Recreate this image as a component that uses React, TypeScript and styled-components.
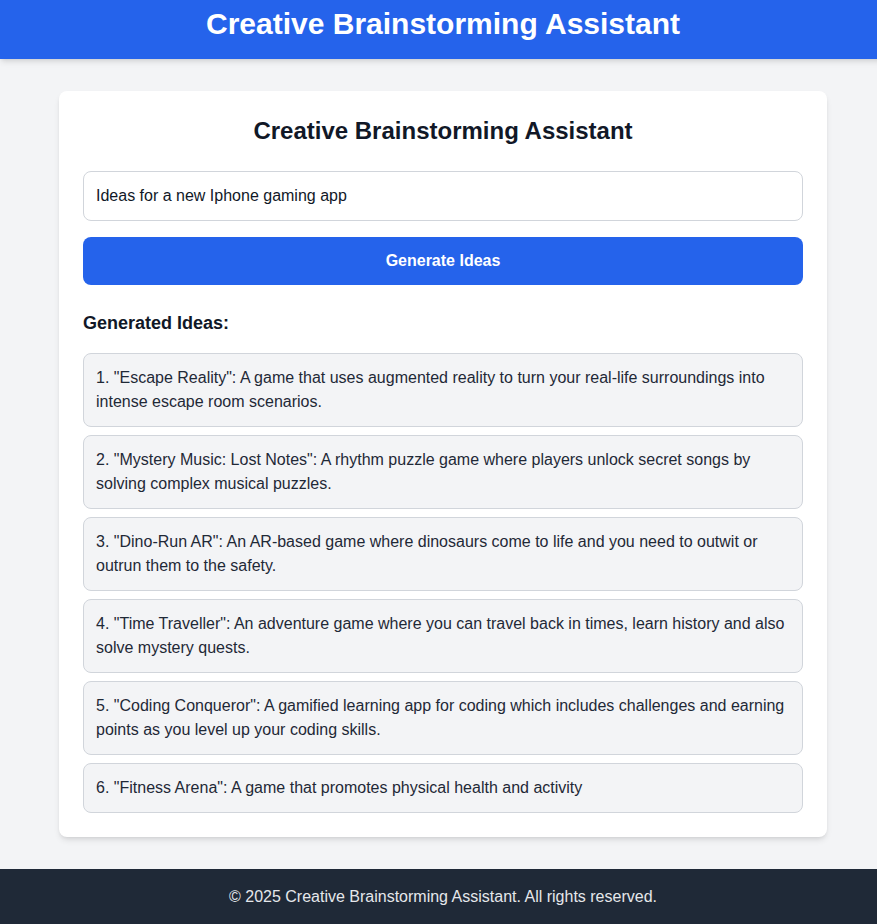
import React, { useState } from "react";
import styled, { createGlobalStyle } from "styled-components";

const GlobalStyle = createGlobalStyle`
  * { box-sizing: border-box; }
  html, body { margin: 0; padding: 0; overflow-x: hidden; }
  body {
    font-family: "Liberation Sans", Arial, sans-serif;
    background: #f3f4f6;
    color: #1f2937;
  }
`;

const Page = styled.div`
  width: 886px;
  min-height: 924px;
  display: flex;
  flex-direction: column;
  background: #f3f4f6;
`;

const Header = styled.header`
  height: 59px;
  background: #2563eb;
  box-shadow: 0 4px 6px -1px rgba(0, 0, 0, 0.1), 0 2px 4px -2px rgba(0, 0, 0, 0.1);
  display: flex;
  justify-content: center;
  align-items: flex-start;
  padding-top: 6px;
  position: relative;
  z-index: 1;
`;

const HeaderTitle = styled.h1`
  margin: 0;
  font-size: 30px;
  line-height: 36px;
  font-weight: 700;
  color: #ffffff;
`;

const Main = styled.main`
  flex: 1;
  padding: 32px 0;
  display: flex;
  justify-content: center;
`;

const Card = styled.section`
  width: 768px;
  background: #ffffff;
  border-radius: 8px;
  box-shadow: 0 4px 6px -1px rgba(0, 0, 0, 0.1), 0 2px 4px -2px rgba(0, 0, 0, 0.1);
  padding: 24px;
`;

const CardTitle = styled.h2`
  margin: 0 0 24px;
  font-size: 24px;
  line-height: 32px;
  font-weight: 700;
  text-align: center;
  color: #111827;
`;

const Input = styled.input`
  display: block;
  width: 100%;
  height: 50px;
  padding: 12px;
  border: 1px solid #d1d5db;
  border-radius: 8px;
  font-family: inherit;
  font-size: 16px;
  line-height: 24px;
  color: #111827;
  background: #ffffff;
  outline: none;
  margin-bottom: 16px;
`;

const Button = styled.button`
  display: block;
  width: 100%;
  height: 48px;
  padding: 12px;
  border: none;
  border-radius: 8px;
  background: #2563eb;
  color: #ffffff;
  font-family: inherit;
  font-size: 16px;
  line-height: 24px;
  font-weight: 700;
  cursor: pointer;
`;

const Results = styled.div`
  margin-top: 24px;
`;

const ResultsTitle = styled.h3`
  margin: 0 0 16px;
  font-size: 18px;
  line-height: 28px;
  font-weight: 700;
  color: #111827;
`;

const IdeaList = styled.ul`
  list-style: none;
  margin: 0;
  padding: 0;
  display: flex;
  flex-direction: column;
  gap: 8px;
`;

const Idea = styled.li`
  background: #f3f4f6;
  border: 1px solid #d1d5db;
  border-radius: 8px;
  padding: 12px;
  font-size: 16px;
  line-height: 24px;
  color: #1f2937;
`;

const Footer = styled.footer`
  background: #1f2937;
  color: #e5e7eb;
  text-align: center;
  padding: 16px;
  font-size: 16px;
  line-height: 23px;
`;

const ideas = [
  '1. "Escape Reality": A game that uses augmented reality to turn your real-life surroundings into intense escape room scenarios.',
  '2. "Mystery Music: Lost Notes": A rhythm puzzle game where players unlock secret songs by solving complex musical puzzles.',
  '3. "Dino-Run AR": An AR-based game where dinosaurs come to life and you need to outwit or outrun them to the safety.',
  '4. "Time Traveller": An adventure game where you can travel back in times, learn history and also solve mystery quests.',
  '5. "Coding Conqueror": A gamified learning app for coding which includes challenges and earning points as you level up your coding skills.',
  '6. "Fitness Arena": A game that promotes physical health and activity',
];

export default function App() {
  const [prompt, setPrompt] = useState("Ideas for a new Iphone gaming app");
  return (
    <>
      <GlobalStyle />
      <Page>
        <Header>
          <HeaderTitle>Creative Brainstorming Assistant</HeaderTitle>
        </Header>
        <Main>
          <Card>
            <CardTitle>Creative Brainstorming Assistant</CardTitle>
            <Input value={prompt} onChange={(e) => setPrompt(e.target.value)} />
            <Button>Generate Ideas</Button>
            <Results>
              <ResultsTitle>Generated Ideas:</ResultsTitle>
              <IdeaList>
                {ideas.map((idea) => (
                  <Idea key={idea}>{idea}</Idea>
                ))}
              </IdeaList>
            </Results>
          </Card>
        </Main>
        <Footer>© 2025 Creative Brainstorming Assistant. All rights reserved.</Footer>
      </Page>
    </>
  );
}
